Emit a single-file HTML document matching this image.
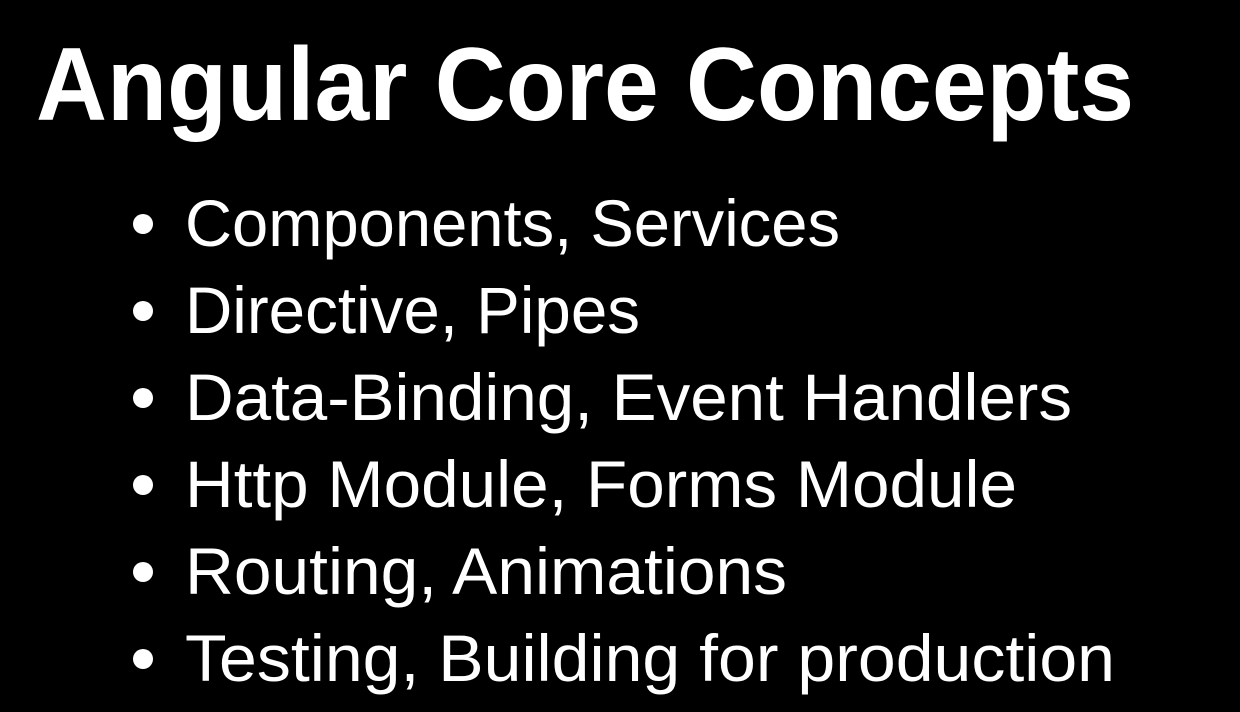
<!DOCTYPE html>
<html><head><meta charset="utf-8"><style>
html,body{margin:0;padding:0;background:#000;width:1240px;height:712px;overflow:hidden}
svg{display:block}
text{font-family:"Liberation Sans",sans-serif;fill:#fff}
</style></head><body>
<svg width="1240" height="712" viewBox="0 0 1240 712">
<rect width="1240" height="712" fill="#000"/>
<text x="36" y="120" font-size="104" font-weight="bold" textLength="1098" lengthAdjust="spacingAndGlyphs">Angular Core Concepts</text>
<g font-size="66">
<circle cx="143" cy="224" r="10" fill="#fff"/>
<text x="185" y="246" textLength="655" lengthAdjust="spacingAndGlyphs">Components, Services</text>
<circle cx="143" cy="311" r="10" fill="#fff"/>
<text x="185" y="333" textLength="455" lengthAdjust="spacingAndGlyphs">Directive, Pipes</text>
<circle cx="143" cy="398" r="10" fill="#fff"/>
<text x="185" y="420" textLength="887" lengthAdjust="spacingAndGlyphs">Data-Binding, Event Handlers</text>
<circle cx="143" cy="485" r="10" fill="#fff"/>
<text x="185" y="507" textLength="832" lengthAdjust="spacingAndGlyphs">Http Module, Forms Module</text>
<circle cx="143" cy="572" r="10" fill="#fff"/>
<text x="185" y="594" textLength="602" lengthAdjust="spacingAndGlyphs">Routing, Animations</text>
<circle cx="143" cy="659" r="10" fill="#fff"/>
<text x="185" y="681" textLength="930" lengthAdjust="spacingAndGlyphs">Testing, Building for production</text>
</g>
</svg>
</body></html>
